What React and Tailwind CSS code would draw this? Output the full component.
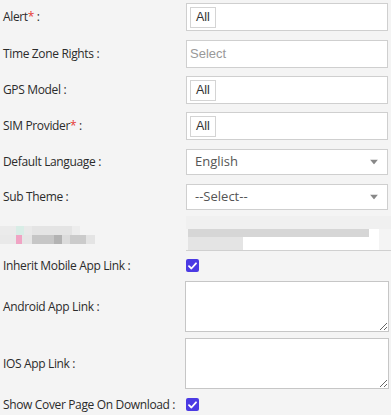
import React from "react";

const labelCls = "w-[186px] shrink-0 pl-[3px] text-[12px] tracking-[-0.35px] text-[#2b2b2b] leading-none";
const font = { fontFamily: '"Open Sans", "Noto Sans", sans-serif' };
const arial = { fontFamily: '"Liberation Sans", Arial, sans-serif' };

function Caret() {
  return (
    <svg width="8" height="5" viewBox="0 0 8 5" className="absolute right-[9px] top-1/2 -translate-y-1/2">
      <path d="M0 0H8L4 5Z" fill="#888" />
    </svg>
  );
}

function Check() {
  return (
    <div className="w-[13px] h-[13px] rounded-[2px] bg-[#4b3ae3] flex items-center justify-center">
      <svg width="9" height="8" viewBox="0 0 9 8">
        <path d="M1 4.2L3.4 6.5L8 1.3" stroke="#fff" strokeWidth="1.8" fill="none" strokeLinecap="round" strokeLinejoin="round" />
      </svg>
    </div>
  );
}

function TagInput({ label, req, mt }) {
  return (
    <div className={`flex items-center ${mt} h-[28px]`}>
      <div className={labelCls} style={font}>
        {label}
        {req && <span className="text-[#e53935]">*</span>} :
      </div>
      <div className="w-[202px] h-[28px] bg-white border border-[#cfcfcf] flex items-center pl-[3px]">
        <span className="h-[21px] px-[5px] border border-[#d4d4d4] flex items-center text-[12.5px] text-[#333]" style={arial}>All</span>
      </div>
    </div>
  );
}

function SelectRow({ label, value }) {
  return (
    <div className="flex items-center mt-[9px] h-[26px]">
      <div className={labelCls} style={font}>{label} :</div>
      <div className="relative w-[202px] h-[26px] bg-white border border-[#cfcfcf] flex items-center pl-[8px]">
        <span className="text-[13px] text-[#555]" style={font}>{value}</span>
        <Caret />
      </div>
    </div>
  );
}

export default function App() {
  return (
    <div className="w-[391px] h-[415px] bg-[#f4f4f4] overflow-hidden flex flex-col">
      <TagInput label="Alert" req mt="mt-[3px]" />
      <div className="flex items-center mt-[9px] h-[28px]">
        <div className={labelCls} style={font}>Time Zone Rights :</div>
        <div className="w-[202px] h-[28px] bg-white border border-[#cfcfcf] flex items-center pl-[3px]">
          <span className="text-[13px] text-[#999]" style={arial}>Select</span>
        </div>
      </div>
      <TagInput label="GPS Model" mt="mt-[8px]" />
      <TagInput label="SIM Provider" req mt="mt-[8px]" />
      <SelectRow label="Default Language" value="English" />
      <SelectRow label="Sub Theme" value="--Select--" />
      {/* Blurred row */}
      <div className="flex mt-[6px] h-[35px]">
        <div className="w-[186px] shrink-0 flex items-center">
          <div className="flex flex-col mt-[2px]">
            <div className="flex h-[9px]">
              <div className="w-[16px] bg-[#ebebeb]" />
              <div className="w-[8px] bg-[#d8ede6]" />
              <div className="w-[8px] bg-[#e9e9e9]" />
              <div className="w-[40px] bg-[#e4e4e4]" />
              <div className="w-[8px] bg-[#ededed]" />
            </div>
            <div className="flex h-[9px]">
              <div className="w-[16px] bg-[#e9e9e9]" />
              <div className="w-[6px] bg-[#f0a4c4]" />
              <div className="w-[10px] bg-[#e6e6e6]" />
              <div className="w-[22px] bg-[#c6c6c6]" />
              <div className="w-[8px] bg-[#b3b3b3]" />
              <div className="w-[8px] bg-[#dcdcdc]" />
              <div className="w-[16px] bg-[#cbcbcb]" />
              <div className="w-[9px] bg-[#e4e4e4]" />
            </div>
          </div>
        </div>
        <div className="w-[205px] h-[35px] border-b border-[#d0d0d0] flex flex-col">
          <div className="h-[13px] bg-[#f0f0f0]" />
          <div className="flex h-[8px]">
            <div className="w-[2px]" />
            <div className="w-[181px] bg-[#d6d6d6]" />
            <div className="w-[10px] bg-white" />
          </div>
          <div className="flex flex-1">
            <div className="w-[2px]" />
            <div className="w-[55px] bg-[#e4e4e4]" />
            <div className="w-[136px] bg-white" />
          </div>
        </div>
      </div>
      <div className="flex items-center mt-[8px] h-[13px]">
        <div className={labelCls} style={font}>Inherit Mobile App Link :</div>
        <Check />
      </div>
      <div className="flex items-center mt-[9px] h-[51px]">
        <div className="w-[185px] shrink-0 pl-[3px] text-[12px] tracking-[-0.35px] text-[#2b2b2b] leading-none" style={font}>Android App Link :</div>
        <textarea className="block w-[204px] h-[51px] bg-white border border-[#c6c6c6] outline-none" />
      </div>
      <div className="flex items-center mt-[6px] h-[51px]">
        <div className="w-[185px] shrink-0 pl-[3px] text-[12px] tracking-[-0.35px] text-[#2b2b2b] leading-none" style={font}>IOS App Link :</div>
        <textarea className="block w-[204px] h-[51px] bg-white border border-[#c6c6c6] outline-none" />
      </div>
      <div className="flex items-center mt-[9px] h-[13px]">
        <div className={labelCls} style={font}>Show Cover Page On Download :</div>
        <Check />
      </div>
    </div>
  );
}
